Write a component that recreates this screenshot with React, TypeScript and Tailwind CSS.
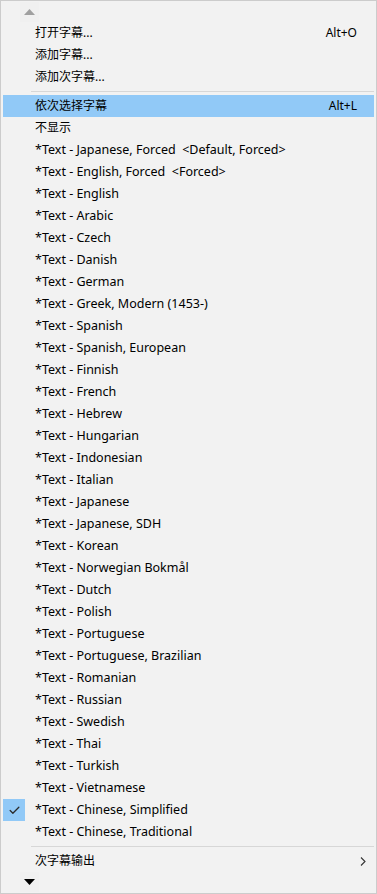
import { Check } from "lucide-react";

const languages = [
  "Japanese, Forced  <Default, Forced>",
  "English, Forced  <Forced>",
  "English",
  "Arabic",
  "Czech",
  "Danish",
  "German",
  "Greek, Modern (1453-)",
  "Spanish",
  "Spanish, European",
  "Finnish",
  "French",
  "Hebrew",
  "Hungarian",
  "Indonesian",
  "Italian",
  "Japanese",
  "Japanese, SDH",
  "Korean",
  "Norwegian Bokmål",
  "Dutch",
  "Polish",
  "Portuguese",
  "Portuguese, Brazilian",
  "Romanian",
  "Russian",
  "Swedish",
  "Thai",
  "Turkish",
  "Vietnamese",
  "Chinese, Simplified",
  "Chinese, Traditional",
];

const FONT = "font-['Microsoft_YaHei','Noto_Sans','Noto_Sans_CJK_SC',sans-serif]";

function Item({
  label,
  shortcut,
  active,
  checked,
  submenu,
  latin,
}: {
  label: string;
  shortcut?: string;
  active?: boolean;
  checked?: boolean;
  submenu?: boolean;
  latin?: boolean;
}) {
  return (
    <div className={`flex h-[22px] items-center ${active ? "bg-[#91c9f7]" : ""}`}>
      <div className={`flex h-[22px] w-[22px] items-center justify-center ${checked ? "bg-[#91c9f7]" : ""}`}>
        {checked && <Check size={13} strokeWidth={2.4} className="text-[#2b2b2b]" />}
      </div>
      <span
        className={`ml-[10px] flex-1 whitespace-pre leading-none text-black ${
          latin ? "text-[12.5px]" : "text-[12px]"
        }`}
      >
        {label}
      </span>
      {shortcut && <span className="mr-[17px] text-[12px] leading-none text-black">{shortcut}</span>}
      {submenu && (
        <svg width="6" height="9" viewBox="0 0 6 9" className="mr-[8px]">
          <path d="M1 0.5 L5 4.5 L1 8.5" fill="none" stroke="#333" strokeWidth="1.1" />
        </svg>
      )}
    </div>
  );
}

function Separator() {
  return (
    <div className="flex h-[7px] items-center pl-[28px]">
      <div className="h-px flex-1 bg-[#d7d7d7]" />
    </div>
  );
}

export default function App() {
  return (
    <div className={`h-[894px] w-[377px] border border-[#cccccc] bg-[#f2f2f2] ${FONT}`}>
      <div className="flex h-[21px] items-center pl-[19px]">
        <div className="flex h-[20px] w-[19px] items-center justify-center bg-[#f0f0f0]">
          <svg width="11" height="6" viewBox="0 0 11 6">
            <path d="M0 6 L5.5 0 L11 6 Z" fill="#a0a0a0" />
          </svg>
        </div>
      </div>
      <div className="px-[2px]">
        <Item label="打开字幕..." shortcut="Alt+O" />
        <Item label="添加字幕..." />
        <Item label="添加次字幕..." />
        <Separator />
        <Item label="依次选择字幕" shortcut="Alt+L" active />
        <Item label="不显示" />
        {languages.map((l) => (
          <Item key={l} label={`*Text - ${l}`} checked={l === "Chinese, Simplified"} latin />
        ))}
        <Separator />
        <Item label="次字幕输出" submenu />
      </div>
      <div className="flex h-[20px] items-center pl-[19px]">
        <div className="flex h-[20px] w-[19px] items-center justify-center bg-[#f0f0f0]">
          <svg width="11" height="6" viewBox="0 0 11 6">
            <path d="M0 0 L11 0 L5.5 6 Z" fill="#000" />
          </svg>
        </div>
      </div>
    </div>
  );
}
